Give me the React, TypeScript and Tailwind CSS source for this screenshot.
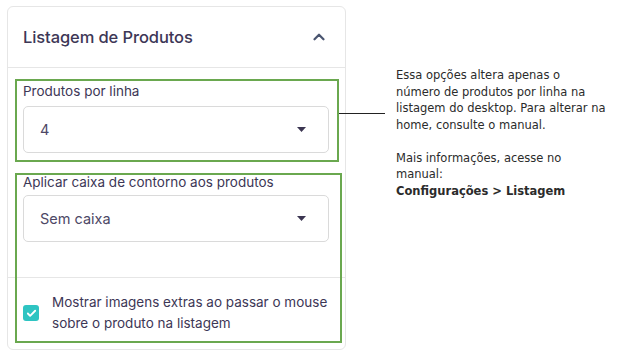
import React from "react";
import { ChevronUp, Check } from "lucide-react";

const inter = { fontFamily: "Inter, 'Noto Sans', sans-serif" };

const Caret = () => (
  <svg width="9" height="5" viewBox="0 0 9 5" className="text-[#3b3551]">
    <path d="M0 0 L9 0 L4.5 5 Z" fill="currentColor" />
  </svg>
);

const SelectBox: React.FC<{ value: string }> = ({ value }) => (
  <div className="h-[47px] w-[306px] rounded-[5px] border border-[#dadada] flex items-center justify-between pl-[16px] pr-[22px]">
    <span className="text-[14.5px] text-[#4d4866]">{value}</span>
    <Caret />
  </div>
);

export default function App() {
  return (
    <div
      className="relative w-[637px] h-[354px] bg-white flex overflow-hidden"
      style={inter}
    >
      {/* panel */}
      <div className="ml-[7px] mt-[6px] w-[339px] h-[344px] rounded-[6px] border border-[#e6e6e6] flex flex-col">
        <div className="h-[61px] border-b border-[#e6e6e6] flex items-center justify-between pl-[15px] pr-[17px]">
          <span className="text-[16.5px] font-medium text-[#3d3756] tracking-[-0.1px]">
            Listagem de Produtos
          </span>
          <ChevronUp size={18} strokeWidth={3} className="text-[#4a5570]" />
        </div>

        <div className="px-[15px] pt-[13px] h-[209px] flex flex-col">
          <label className="text-[13.5px] text-[#3d3756] leading-[20px] mb-[5px]">
            Produtos por linha
          </label>
          <SelectBox value="4" />
          <label className="text-[13.5px] text-[#3d3756] leading-[20px] mt-[19px] mb-[3px]">
            Aplicar caixa de contorno aos produtos
          </label>
          <SelectBox value="Sem caixa" />
        </div>

        <div className="border-t border-[#e6e6e6] pl-[15px] pr-[8px] pt-[14px] flex items-center gap-[13px]">
          <div className="w-[16px] h-[16px] rounded-[3px] bg-[#2ec4c2] flex items-center justify-center shrink-0">
            <Check size={11} strokeWidth={4} className="text-white" />
          </div>
          <span className="text-[13.5px] leading-[21px] text-[#3d3756]">
            Mostrar imagens extras ao passar o mouse sobre o produto na listagem
          </span>
        </div>
      </div>

      {/* annotation */}
      <div
        className="ml-[50px] mt-[67px] text-[11.5px] leading-[16.5px] text-[#2b2b2b]"
        style={{ fontFamily: "'DejaVu Sans', sans-serif" }}
      >
        <p>
          Essa opções altera apenas o<br />
          número de produtos por linha na<br />
          listagem do desktop. Para alterar na<br />
          home, consulte o manual.
        </p>
        <p className="mt-[16.5px]">
          Mais informações, acesse no
          <br />
          manual:
        </p>
        <p className="font-bold">Configurações &gt; Listagem</p>
      </div>

      {/* highlight overlays */}
      <div className="absolute left-[15px] top-[79px] w-[324px] h-[83px] border-2 border-[#6aa84f]" />
      <div className="absolute left-[15px] top-[173px] w-[327px] h-[170px] border-2 border-[#6aa84f]" />
      <div className="absolute left-[339px] top-[113px] w-[46px] h-px bg-[#222]" />
    </div>
  );
}
